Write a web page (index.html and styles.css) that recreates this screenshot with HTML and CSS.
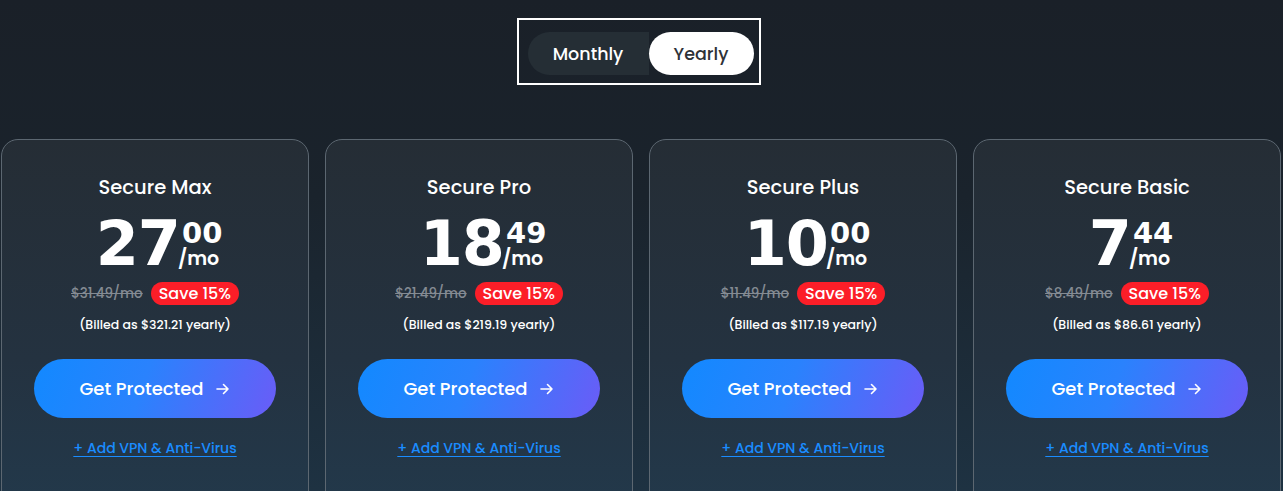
FILE: index.html
```html
<!DOCTYPE html>
<html lang="en">
<head>
<meta charset="utf-8">
<title>Pricing</title>
<link rel="stylesheet" href="styles.css">
</head>
<body>
<main class="page">
  <div class="toggle-wrap">
    <div class="toggle">
      <span class="opt">Monthly</span>
      <span class="opt active">Yearly</span>
    </div>
  </div>
  <section class="cards">
    <article class="card">
      <h2 class="title">Secure Max</h2>
      <div class="price"><span class="whole">27</span><span class="side"><span class="cents">00</span><span class="per">/mo</span></span></div>
      <div class="deal"><span class="old">$31.49/mo</span><span class="save">Save 15%</span></div>
      <p class="billed">(Billed as $321.21 yearly)</p>
      <a class="cta" href="#">Get Protected <svg class="arrow" viewBox="0 0 16 16" width="16" height="16"><path d="M2 8h11M8.5 3.5L13 8l-4.5 4.5" fill="none" stroke="#fff" stroke-width="1.6" stroke-linecap="round" stroke-linejoin="round"/></svg></a>
      <a class="addon" href="#">+ Add VPN &amp; Anti-Virus</a>
    </article>
    <article class="card">
      <h2 class="title">Secure Pro</h2>
      <div class="price"><span class="whole">18</span><span class="side"><span class="cents">49</span><span class="per">/mo</span></span></div>
      <div class="deal"><span class="old">$21.49/mo</span><span class="save">Save 15%</span></div>
      <p class="billed">(Billed as $219.19 yearly)</p>
      <a class="cta" href="#">Get Protected <svg class="arrow" viewBox="0 0 16 16" width="16" height="16"><path d="M2 8h11M8.5 3.5L13 8l-4.5 4.5" fill="none" stroke="#fff" stroke-width="1.6" stroke-linecap="round" stroke-linejoin="round"/></svg></a>
      <a class="addon" href="#">+ Add VPN &amp; Anti-Virus</a>
    </article>
    <article class="card">
      <h2 class="title">Secure Plus</h2>
      <div class="price"><span class="whole">10</span><span class="side"><span class="cents">00</span><span class="per">/mo</span></span></div>
      <div class="deal"><span class="old">$11.49/mo</span><span class="save">Save 15%</span></div>
      <p class="billed">(Billed as $117.19 yearly)</p>
      <a class="cta" href="#">Get Protected <svg class="arrow" viewBox="0 0 16 16" width="16" height="16"><path d="M2 8h11M8.5 3.5L13 8l-4.5 4.5" fill="none" stroke="#fff" stroke-width="1.6" stroke-linecap="round" stroke-linejoin="round"/></svg></a>
      <a class="addon" href="#">+ Add VPN &amp; Anti-Virus</a>
    </article>
    <article class="card">
      <h2 class="title">Secure Basic</h2>
      <div class="price"><span class="whole">7</span><span class="side"><span class="cents">44</span><span class="per">/mo</span></span></div>
      <div class="deal"><span class="old">$8.49/mo</span><span class="save">Save 15%</span></div>
      <p class="billed">(Billed as $86.61 yearly)</p>
      <a class="cta" href="#">Get Protected <svg class="arrow" viewBox="0 0 16 16" width="16" height="16"><path d="M2 8h11M8.5 3.5L13 8l-4.5 4.5" fill="none" stroke="#fff" stroke-width="1.6" stroke-linecap="round" stroke-linejoin="round"/></svg></a>
      <a class="addon" href="#">+ Add VPN &amp; Anti-Virus</a>
    </article>
  </section>
</main>
</body>
</html>
```

FILE: styles.css
```css
* { box-sizing: border-box; }
html, body {
  margin: 0;
  height: 100%;
  overflow: hidden;
}
body {
  font-family: "Poppins", "Inter", "Noto Sans", sans-serif;
  background: linear-gradient(180deg, #1a2028 0%, #1a232c 40%, #1e3242 100%);
  color: #fff;
}
.page {
  padding-top: 18px;
}
.toggle-wrap {
  display: flex;
  justify-content: center;
}
.toggle {
  display: flex;
  border: 2px solid #fff;
  padding: 12px 5px 8px 9px;
  width: 244px;
  height: 67px;
  margin-right: 6px;
}
.toggle .opt {
  display: flex;
  align-items: center;
  justify-content: center;
  height: 43px;
  font-size: 17.5px;
  font-weight: 500;
}
.toggle .opt:first-child {
  background: #252e35;
  border-radius: 22px 0 0 22px;
  width: 121px;
  color: #fff;
}
.toggle .opt.active {
  background: #fff;
  color: #2e3238;
  border-radius: 22px;
  width: 105px;
}
.cards {
  display: grid;
  grid-template-columns: repeat(4, 308px);
  gap: 16px;
  margin-top: 54px;
  padding-left: 1px;
}
.card {
  height: 400px;
  border: 1px solid #5c6771;
  border-radius: 17px;
  background: linear-gradient(180deg, #252d35 0%, #243240 55%, #223a4d 100%);
  display: flex;
  flex-direction: column;
  align-items: center;
  padding-top: 36px;
}
.title {
  margin: 0;
  font-size: 19.5px;
  font-weight: 500;
  line-height: 24px;
}
.price {
  display: flex;
  align-items: stretch;
  margin-top: 20px;
  height: 48px;
  padding-left: 8px;
}
.whole {
  font-family: "DejaVu Sans", "Poppins", sans-serif;
  font-size: 62px;
  font-weight: 700;
  line-height: 48px;
  letter-spacing: -1px;
}
.side {
  display: flex;
  flex-direction: column;
  justify-content: space-between;
  margin-left: -1px;
}
.cents {
  font-family: "DejaVu Sans", "Poppins", sans-serif;
  font-size: 29px;
  font-weight: 700;
  line-height: 20px;
  margin-top: 3px;
  margin-left: 3px;
}
.per {
  font-size: 19px;
  font-weight: 600;
  line-height: 18px;
  margin-left: -1px;
}
.deal {
  display: flex;
  align-items: center;
  gap: 8px;
  margin-top: 14px;
}
.old {
  color: #848b93;
  font-size: 13.5px;
  font-weight: 500;
  text-decoration: line-through;
}
.save {
  background: #fc1e28;
  color: #fff;
  font-size: 16px;
  font-weight: 500;
  border-radius: 12px;
  padding: 0 8px;
  line-height: 23px;
}
.billed {
  margin: 11px 0 0;
  font-size: 12.5px;
  font-weight: 500;
  line-height: 18px;
}
.cta {
  margin-top: 25px;
  width: 242px;
  height: 59px;
  border-radius: 30px;
  background: linear-gradient(110deg, #1289ff 0%, #2a82fd 45%, #6a5cf7 100%);
  display: flex;
  align-items: center;
  justify-content: center;
  gap: 11px;
  color: #fff;
  text-decoration: none;
  font-size: 18px;
  font-weight: 500;
}
.arrow { display: block; }
.addon {
  margin-top: 20px;
  color: #1a8cff;
  font-size: 14px;
  font-weight: 500;
  text-decoration: underline;
  text-underline-offset: 3px;
}
```
